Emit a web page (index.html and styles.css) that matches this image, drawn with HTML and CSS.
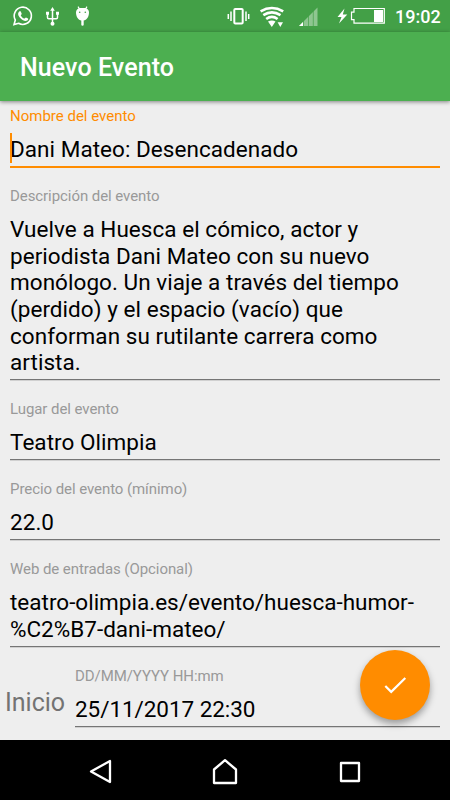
FILE: index.html
```html
<!DOCTYPE html>
<html lang="es">
<head>
<meta charset="utf-8">
<title>Nuevo Evento</title>
<link rel="stylesheet" href="styles.css">
</head>
<body>
<div class="screen">
  <div class="status">
    <svg class="status-icons" width="390" height="31" viewBox="0 0 390 31" fill="#fff">
      <path d="M14 24.6l1.3-4.6a8.6 8.6 0 1 1 3.3 3.3z" fill="none" stroke="#fff" stroke-width="1.6"/>
      <path d="M19.2 11.6c.5-.6 1.3-.6 1.6 0l.9 2.1c.1.5-.9 1.3-.9 1.700.8 1.600 2 2.600 3.600 3.200.5 0 1.100-1.300 1.600-1.200l2 1c.6.4-.1 1.800-.8 2.200-2 1.100-4.800-.4-6.400-2s-3.400-4.200-2.300-6.200z"/>
      <g stroke="#fff" stroke-width="1.5" fill="none"><path d="M52.500 10v13M47.500 14v3.500q0 1.200 1.200 1.200h7.600q1.200 0 1.200-1.200V14"/></g>
      <path d="M52.500 7l2.300 3.800h-4.600zM46 11.800h3v3h-3zM56 11.800h3v3h-3z"/><circle cx="52.500" cy="23.800" r="2"/>
      <path d="M76 12.500q0-3.500 3.500-4.500h6q3.500 1 3.500 4.500c0 4.500-2.500 7.500-5.300 8v4.300q0 1-1.200 1t-1.200-1v-4.300c-2.800-.5-5.300-3.500-5.300-8z"/>
      <path d="M79.500 9l-1.500-2.300M85.500 9l1.500-2.300" stroke="#fff" stroke-width="1.200"/>
      <circle cx="79.700" cy="12.300" r=".8" fill="#43a047"/><circle cx="85.300" cy="12.300" r=".8" fill="#43a047"/>
      <rect x="234.300" y="9" width="8.400" height="14.500" rx="1" fill="none" stroke="#fff" stroke-width="2"/>
      <path d="M231 11.500v9.500M246 11.500v9.500M228.300 14v5M248.700 14v5" stroke="#fff" stroke-width="1.500"/>
      <g fill="none" stroke="#fff" stroke-width="2.600"><path d="M260.600 11.300q11.300-6.600 22.600 0M263.300 15.200q8.600-5.600 17.200 0M266.200 19q5.700-4.200 11.400 0"/></g>
      <path d="M268 21.500q4-2 7.500 0L271.800 27zM277.600 22.300h5.400L280.300 27z"/>
      <path d="M299 26L317.500 7.500V26z" opacity=".4"/><path d="M299 26l4-4v4z"/>
      <path d="M303.500 7v19M308.500 7v19M313.300 7v19" stroke="#43a047" stroke-width=".7"/>
      <path d="M344.500 8.500L337.500 17h4l-2.500 6.500 8.300-9h-4.500z"/>
      <path d="M354 8.500h30.300v14.700H354v-3.500h-2.500v-7.500h2.500z" fill="none" stroke="#fff" stroke-width="1.200"/><path d="M374 10h9v12h-9z"/>
    </svg>
    <span class="clock">19:02</span>
  </div>
  <header class="toolbar"><h1>Nuevo Evento</h1></header>
  <main class="form">
    <div class="field focused"><div class="label">Nombre del evento</div><div class="value"><i class="caret"></i>Dani Mateo: Desencadenado</div></div>
    <div class="field"><div class="label">Descripción del evento</div><div class="value">Vuelve a Huesca el cómico, actor y<br>periodista Dani Mateo con su nuevo<br>monólogo. Un viaje a través del tiempo<br>(perdido) y el espacio (vacío) que<br>conforman su rutilante carrera como<br>artista.</div></div>
    <div class="field"><div class="label">Lugar del evento</div><div class="value">Teatro Olimpia</div></div>
    <div class="field"><div class="label">Precio del evento (mínimo)</div><div class="value">22.0</div></div>
    <div class="field"><div class="label">Web de entradas (Opcional)</div><div class="value url">teatro-olimpia.es/evento/huesca-humor-<br>%C2%B7-dani-mateo/</div></div>
    <div class="row">
      <div class="prefix">Inicio</div>
      <div class="field"><div class="label">DD/MM/YYYY HH:mm</div><div class="value url">25/11/2017 22:30</div></div>
    </div>
  </main>
  <button class="fab" aria-label="Guardar"><svg width="30" height="30" viewBox="0 0 30 30"><path d="M5.300 16l5.900 5.900L25.300 8" fill="none" stroke="#fff" stroke-width="2.200"/></svg></button>
  <nav class="navbar">
    <svg width="26" height="26" viewBox="0 0 26 26"><path d="M4 12.500L23 2v21z"/></svg>
    <svg width="26" height="26" viewBox="0 0 26 26"><path d="M2 10.500L13 1.200l11 9.300V24H2z"/></svg>
    <svg width="26" height="26" viewBox="0 0 26 26"><path d="M4 4h18v18H4z"/></svg>
  </nav>
</div>
</body>
</html>
```
FILE: styles.css
```css
* { box-sizing: border-box; }
body { margin: 0; font-family: Roboto, sans-serif; }
.screen { position: relative; width: 450px; height: 800px; overflow: hidden; display: flex; flex-direction: column; background: #eee; }
.status { height: 32px; flex: none; display: flex; background: #43a047; color: #fff; }
.status-icons { flex: none; }
.clock { margin-left: 5px; font-size: 18px; font-weight: 500; line-height: 33px; }
.toolbar { height: 69px; flex: none; display: flex; align-items: center; padding: 3px 20px 0; background: #4caf50; color: #fff; box-shadow: 0 1px 4px rgba(0,0,0,.45); z-index: 1; }
h1 { margin: 0; font-size: 25px; font-weight: 500; line-height: 30px; letter-spacing: .08px; }
.form { flex: 1; min-height: 0; padding: 5.67px 10px 0; display: flex; flex-direction: column; gap: 20px; }
.field { flex: none; display: flex; flex-direction: column; border-bottom: 1px solid #757575; box-shadow: 0 1px #d0d0d0; padding-bottom: 3px; }
.label { height: 18px; margin-bottom: 11.33px; font-size: 15px; line-height: 18px; letter-spacing: -.07px; color: #999; white-space: nowrap; }
.value { position: relative; font-size: 22.5px; line-height: 26.67px; letter-spacing: .045px; color: #000; white-space: nowrap; }
.url { letter-spacing: 0; }
.focused { border-bottom: 2px solid #ff8c00; box-shadow: none; margin-bottom: -1px; }
.focused .label { color: #ff8c00; letter-spacing: 0; }
.caret { position: absolute; left: 0; top: -3px; width: 2px; height: 30px; background: #ff8c00; }
.row { display: flex; margin-left: -5px; flex: none; }
.prefix { width: 70px; font-size: 25px; line-height: 30px; padding-top: 21.5px; color: #737373; }
.row .field { flex: 1; }
.row .value { letter-spacing: -.06px; }
.fab { position: absolute; left: 360px; top: 650px; width: 70px; height: 70px; border: 0; padding: 0; border-radius: 50%; background: #ff8c00; display: flex; align-items: center; justify-content: center; box-shadow: 0 4px 7px rgba(0,0,0,.35); }
.navbar { height: 60px; flex: none; z-index: 1; background: #000; display: flex; justify-content: space-between; align-items: center; padding: 4px 87px 0; }
.navbar path { fill: none; stroke: #fff; stroke-width: 2.300; stroke-linejoin: round; }
```
